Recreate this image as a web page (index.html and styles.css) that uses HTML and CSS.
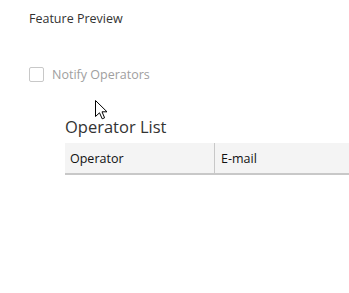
FILE: index.html
```html
<!DOCTYPE html>
<html lang="en">
<head>
  <meta charset="UTF-8">
  <title>Feature Preview</title>
  <link rel="stylesheet" href="styles.css">
</head>
<body>
  <div class="page">
    <div class="section-label">Feature Preview</div>
    <label class="check-row">
      <span class="check-box"></span>
      <span class="check-text">Notify Operators</span>
    </label>
    <div class="operators">
      <div class="list-title">Operator List</div>
      <div class="list-head">
        <div class="col col-name">Operator</div>
        <div class="col col-mail">E-mail</div>
      </div>
    </div>
  </div>
  <svg class="cursor" width="13" height="20" viewBox="0 0 13 20">
    <path d="M0.5 0.5 L0.5 16.5 L4.5 12.8 L7.2 18.8 L9.6 17.8 L7 11.8 L12 11.8 Z" fill="#fff" stroke="#000" stroke-width="1" stroke-linejoin="miter"/>
  </svg>
</body>
</html>
```

FILE: styles.css
```css
body {
  margin: 0;
  background: #fff;
  font-family: 'Segoe UI', 'Open Sans', Arial, sans-serif;
  color: #333;
  overflow: hidden;
}
.page {
  padding: 10px 0 0 29px;
}
.section-label {
  font-size: 12.5px;
  line-height: 18px;
  color: #333;
}
.check-row {
  display: flex; align-items: center; gap: 8px;
  margin-top: 38px;
  height: 16px;
}
.check-box {
  width: 13px; height: 13px;
  border: 1px solid #c8c8c8;
  border-radius: 2px;
  background: #fff;
}
.check-text {
  font-size: 12.5px;
  color: #a0a0a0;
}
.operators {
  margin: 34px 0 0 36px;
}
.list-title {
  font-size: 16.5px;
  line-height: 22px;
  color: #333;
}
.list-head {
  display: flex;
  height: 30px;
  margin-top: 5px;
  background: #f4f4f4;
  border-bottom: 2px solid #c8c8c8;
}
.col {
  display: flex; align-items: center;
  font-size: 12.5px;
  color: #111;
  padding-left: 5px;
}
.col-name {
  width: 144px;
  border-right: 1px solid #c8c8c8;
}
.col-mail {
  padding-left: 6px;
}
.cursor {
  position: absolute;
  left: 95px; top: 100px;
}
```
